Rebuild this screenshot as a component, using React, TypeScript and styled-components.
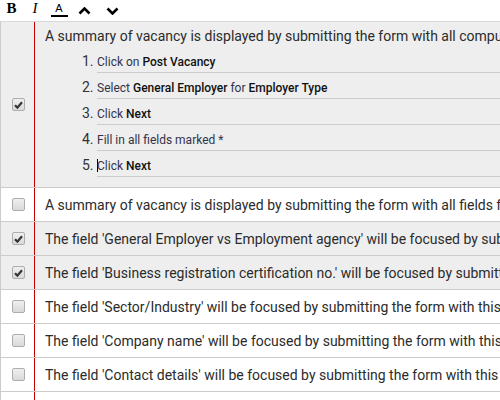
import styled, { createGlobalStyle } from 'styled-components';

const GlobalStyle = createGlobalStyle`
  html, body {
    margin: 0;
    padding: 0;
    overflow: hidden;
    background: #fff;
  }
  body {
    font-family: Roboto, 'Liberation Sans', sans-serif;
    color: #333;
  }
`;

const Page = styled.div`
  width: 900px;
`;

const Toolbar = styled.div`
  display: flex;
  align-items: center;
  height: 21px;
`;

const ToolButton = styled.div<{ $w: number }>`
  width: ${(p) => p.$w}px;
  height: 21px;
  display: flex;
  flex-direction: column;
  align-items: center;
  justify-content: center;
  color: #000;
`;

const SerifGlyph = styled.span<{ $italic?: boolean }>`
  font-family: 'Liberation Serif', serif;
  font-size: 15px;
  line-height: 15px;
  font-weight: ${(p) => (p.$italic ? 'normal' : 'bold')};
  font-style: ${(p) => (p.$italic ? 'italic' : 'normal')};
  margin-top: -4px;
`;

const ColorGlyph = styled.span`
  font-family: 'Liberation Sans', sans-serif;
  font-size: 11px;
  line-height: 10px;
  margin-top: -2px;
`;

const ColorBar = styled.span`
  display: block;
  width: 17px;
  height: 2px;
  margin-top: 2px;
  background: #000;
`;

const Table = styled.div`
  border-top: 1px solid #d8d8d8;
  border-left: 1px solid #ccc;
`;

const Row = styled.div<{ $checked: boolean }>`
  display: flex;
  background: ${(p) => (p.$checked ? '#eeeeee' : '#ffffff')};
  border-bottom: 1px solid #cccccc;
`;

const CheckCell = styled.div`
  width: 33px;
  flex: none;
  border-right: 1px solid #c40000;
  display: flex;
  align-items: center;
  justify-content: center;
`;

const Box = styled.span`
  box-sizing: border-box;
  width: 13px;
  height: 13px;
  border: 1px solid #adadad;
  border-radius: 2px;
  background: linear-gradient(#efefef, #d9d9d9);
  display: flex;
  align-items: center;
  justify-content: center;
  margin-left: 1px;
`;

const TextCell = styled.div<{ $tall?: boolean }>`
  flex: 1;
  min-height: 33px;
  padding: ${(p) => (p.$tall ? '4px 0 10px 10px' : '0 0 0 10px')};
  display: flex;
  flex-direction: column;
  justify-content: ${(p) => (p.$tall ? 'flex-start' : 'center')};
  font-size: 14px;
  line-height: 20px;
  white-space: nowrap;
  color: #2b2b2b;
`;

const Lead = styled.div`
  height: 21px;
`;

const Steps = styled.ol`
  margin: 0 0 0 52px;
  padding: 0;
  color: #333;
`;

const Step = styled.li`
  font-size: 14px;
  line-height: 20px;
  padding: 4px 0 1px 0;
  border-bottom: 1px solid #cccccc;
  &::marker {
    color: #333;
  }
`;

const StepText = styled.span`
  font-size: 12px;
  line-height: 14px;
  color: #33334a;
`;

const Strong = styled.span`
  font-weight: 500;
  color: #111;
`;

const Caret = styled.span`
  display: inline-block;
  width: 1px;
  height: 13px;
  background: #000;
  vertical-align: -2px;
  margin-right: -1px;
`;

const CheckBox = ({ checked }: { checked: boolean }) => (
  <Box>
    {checked && (
      <svg width="9" height="8" viewBox="0 0 9 8">
        <path d="M1 4.2 L3.4 6.6 L8 1.2" fill="none" stroke="#333" strokeWidth="2.2" />
      </svg>
    )}
  </Box>
);

const Chevron = ({ up }: { up: boolean }) => (
  <svg width="13" height="8" viewBox="0 0 13 8">
    <path
      d={up ? 'M1.5 6.5 L6.5 1.5 L11.5 6.5' : 'M1.5 1.5 L6.5 6.5 L11.5 1.5'}
      fill="none"
      stroke="#000"
      strokeWidth="2.6"
    />
  </svg>
);

const rows = [
  { checked: false, text: 'A summary of vacancy is displayed by submitting the form with all fields filled in' },
  {
    checked: true,
    text: "The field 'General Employer vs Employment agency' will be focused by submitting the form with this field empty",
  },
  {
    checked: true,
    text: "The field 'Business registration certification no.' will be focused by submitting the form with this field empty",
  },
  { checked: false, text: "The field 'Sector/Industry' will be focused by submitting the form with this field empty" },
  { checked: false, text: "The field 'Company name' will be focused by submitting the form with this field empty" },
  { checked: false, text: "The field 'Contact details' will be focused by submitting the form with this field empty" },
  { checked: false, text: "The field 'Company address' will be focused by submitting the form with this field empty" },
];

const App = () => {
  return (
    <Page>
      <GlobalStyle />
      <Toolbar>
        <ToolButton $w={23}>
          <SerifGlyph>B</SerifGlyph>
        </ToolButton>
        <ToolButton $w={24}>
          <SerifGlyph $italic>I</SerifGlyph>
        </ToolButton>
        <ToolButton $w={24}>
          <ColorGlyph>A</ColorGlyph>
          <ColorBar />
        </ToolButton>
        <ToolButton $w={26}>
          <Chevron up />
        </ToolButton>
        <ToolButton $w={30}>
          <Chevron up={false} />
        </ToolButton>
      </Toolbar>
      <Table>
        <Row $checked>
          <CheckCell>
            <CheckBox checked />
          </CheckCell>
          <TextCell $tall>
            <Lead>A summary of vacancy is displayed by submitting the form with all compulsory fields filled in</Lead>
            <Steps>
              <Step>
                <StepText>
                  Click on <Strong>Post Vacancy</Strong>
                </StepText>
              </Step>
              <Step>
                <StepText>
                  Select <Strong>General Employer</Strong> for <Strong>Employer Type</Strong>
                </StepText>
              </Step>
              <Step>
                <StepText>
                  Click <Strong>Next</Strong>
                </StepText>
              </Step>
              <Step>
                <StepText>Fill in all fields marked *</StepText>
              </Step>
              <Step>
                <StepText>
                  <Caret />
                  Click <Strong>Next</Strong>
                </StepText>
              </Step>
            </Steps>
          </TextCell>
        </Row>
        {rows.map((row) => (
          <Row key={row.text} $checked={row.checked}>
            <CheckCell>
              <CheckBox checked={row.checked} />
            </CheckCell>
            <TextCell>{row.text}</TextCell>
          </Row>
        ))}
      </Table>
    </Page>
  );
};

export default App;
